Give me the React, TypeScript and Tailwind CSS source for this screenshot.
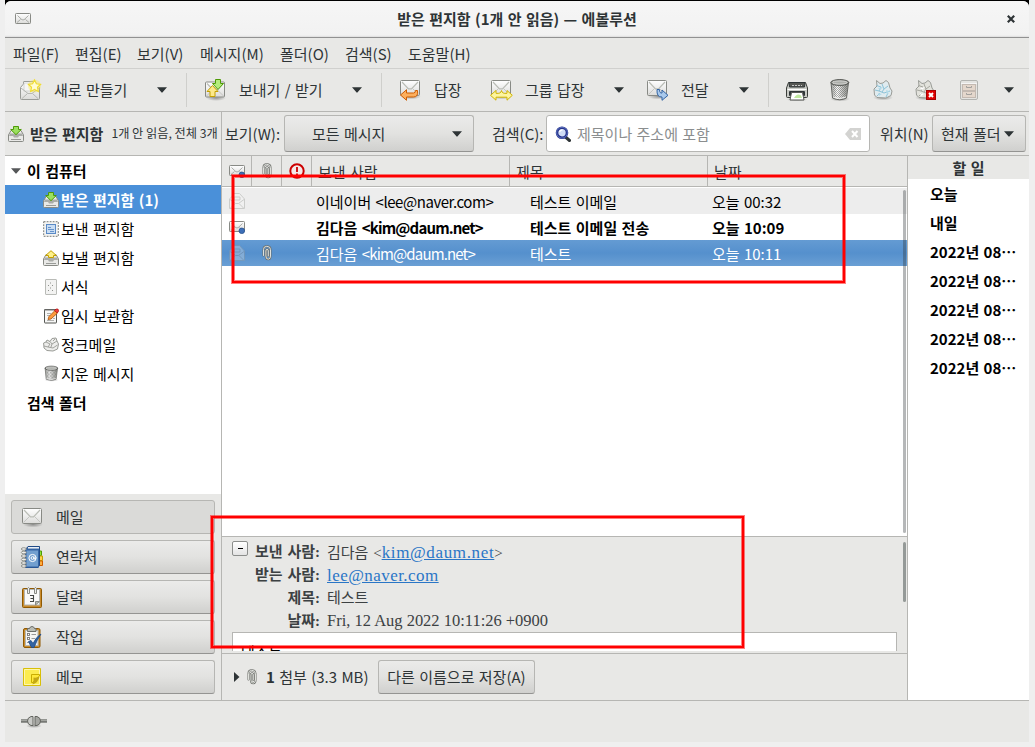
import type { ReactNode } from 'react';

const Arrow = ({ c = '#2e3436' }: { c?: string }) => (
  <svg width="10" height="6" viewBox="0 0 10 6" className="shrink-0">
    <path d="M0 0.3H10L5.6 5.3Q5 6 4.4 5.3Z" fill={c} />
  </svg>
);

const Defs = () => (
  <svg width="0" height="0" className="absolute">
    <defs>
      <linearGradient id="paper" x1="0" y1="0" x2="0" y2="1">
        <stop offset="0" stopColor="#ffffff" />
        <stop offset="1" stopColor="#dcdcda" />
      </linearGradient>
      <linearGradient id="metal" x1="0" y1="0" x2="1" y2="0">
        <stop offset="0" stopColor="#9c9e9a" />
        <stop offset="0.35" stopColor="#ffffff" />
        <stop offset="1" stopColor="#8b8d89" />
      </linearGradient>
      <pattern id="mesh" width="2" height="2" patternUnits="userSpaceOnUse">
        <rect width="1" height="1" fill="#555753" />
        <rect x="1" y="1" width="1" height="1" fill="#555753" />
      </pattern>
      <radialGradient id="shade">
        <stop offset="0" stopColor="#000" stopOpacity="0.35" />
        <stop offset="1" stopColor="#000" stopOpacity="0" />
      </radialGradient>
    </defs>
  </svg>
);

const Svg = ({ s = 24, v = 24, children, className = '' }: { s?: number; v?: number; children: ReactNode; className?: string }) => (
  <svg width={s} height={s} viewBox={`0 0 ${v} ${v}`} className={`shrink-0 ${className}`}>
    {children}
  </svg>
);

const Envelope = () => (
  <>
    <ellipse cx="13" cy="18.5" rx="10" ry="3" fill="url(#shade)" />
    <rect x="2.5" y="2.5" width="19" height="15" rx="1" fill="url(#paper)" stroke="#888a85" />
    <path d="M3.5 16.5L9.5 10.5M20.5 16.5L14.5 10.5" stroke="#c4c5c2" fill="none" />
    <path d="M4 4L10.500 10.800H13.500L20 4" stroke="#babdb6" strokeWidth="1.2" fill="none" />
  </>
);

const NewMail = () => (
  <Svg>
    <path d="M2.5 9.5L5.5 6V4Q5.500 3.500 6 3.500H15L21.500 9.500V20.500Q21.500 21.500 20.500 21.500H3.500Q2.500 21.500 2.500 20.500Z" fill="url(#paper)" stroke="#9a9c98" />
    <rect x="6" y="5" width="12" height="8" fill="#f6f6f5" stroke="#c9cac7" strokeWidth="0.7" />
    <path d="M3 10L10 15.500H14L21 10M3.500 21L9.500 15.500M20.500 21L14.500 15.500" stroke="#b5b7b2" fill="none" />
    <circle cx="16.500" cy="8" r="6.500" fill="#fce94f" opacity="0.4" />
    <path d="M16.500 2L18.400 5.800L22.500 6.400L19.500 9.300L20.300 13.500L16.500 11.500L12.700 13.500L13.500 9.300L10.500 6.400L14.600 5.800Z" fill="#fffbd0" stroke="#f0dc30" strokeWidth="1.2" />
  </Svg>
);

const SendReceive = () => (
  <Svg>
    <g transform="translate(0 1.500)"><Envelope /></g>
    <path d="M12.500 1.500H17.500V5.500H20.500L15 11.500L9.500 5.500H12.500Z" fill="#b4ec7c" stroke="#4e9a06" />
    <path d="M7 18.500V13.500H4L9.500 7.500L15 13.500H12V18.500Z" fill="#fce98a" stroke="#c4a000" />
  </Svg>
);

const Reply = () => (
  <Svg>
    <Envelope />
    <path d="M2.500 17L8.500 11.800V15H15.500Q17.500 15 17.500 12.500H19.500Q20.500 19 15.500 19H8.500V22.300Z" fill="#fcaf5e" stroke="#ce5c00" />
  </Svg>
);

const ReplyAll = () => (
  <Svg>
    <Envelope />
    <path d="M1.500 17.300L7 12.500V15.300Q12 16 12.500 12.500Q13 16 18 15.300V12.500L23.300 17.300L18 22.200V19.200H7V22.200Z" fill="#fdf5a0" stroke="#d0b400" />
  </Svg>
);

const Forward = () => (
  <Svg>
    <Envelope />
    <path d="M12 11.500H14.500Q14.500 15.500 17 15V12L23 17.300L17 22.300V19Q11.500 19.500 12 11.500Z" fill="#a9c9ec" stroke="#3465a4" />
  </Svg>
);

const Printer = () => (
  <Svg>
    <ellipse cx="12" cy="21.500" rx="11" ry="2" fill="url(#shade)" />
    <path d="M3.500 4.500H20.500L22.500 10V18.500Q22.500 19.500 21.500 19.500H2.500Q1.500 19.500 1.500 18.500V10Z" fill="#c8cac5" stroke="#3b3e3a" />
    <path d="M4 4.500H20L19.500 9H4.500Z" fill="#555753" stroke="#2e3436" />
    <path d="M7 7.500H17" stroke="#c8c8c8" strokeDasharray="2 1" />
    <path d="M2.500 11.500H21.500" stroke="#fff" />
    <rect x="4" y="13" width="16" height="5" rx="1" fill="#2e3436" />
    <path d="M6.500 14.500H17.500L19 22H5Z" fill="#fff" stroke="#555753" />
    <path d="M9 20Q12 14.500 16 17.500L17 20Z" fill="#c0e8a0" />
  </Svg>
);

const Trash = ({ s = 24 }: { s?: number }) => (
  <Svg s={s}>
    <ellipse cx="12" cy="21" rx="10" ry="2.500" fill="url(#shade)" />
    <path d="M3 4.500L4.500 20Q12 23.500 18.500 20L20.500 4.500Z" fill="url(#metal)" stroke="#666864" />
    <path d="M4.500 6L6 19.500Q12 22 17.500 19.500L19.500 6Z" fill="url(#mesh)" opacity="0.5" />
    <path d="M5 19Q12 22 18 19" stroke="#eeeeec" fill="none" />
    <ellipse cx="11.800" cy="4.500" rx="9" ry="2.900" fill="#777975" stroke="#555753" />
    <ellipse cx="11.800" cy="4.500" rx="7.500" ry="1.700" fill="#aeb0ac" stroke="#eeeeec" strokeWidth="0.700" />
  </Svg>
);

const Crumple = ({ blue }: { blue?: boolean }) => (
  <>
    <ellipse cx="12" cy="19.500" rx="10" ry="3" fill="url(#shade)" />
    <path d="M5.500 2.500L9 5.500L12 5L15 2.500L17.500 4.500L19 10L21 13L20 17.500L15 20L6 19.500L3.500 17L3 11L6 8Z" fill={blue ? '#e0ebef' : '#e2e2dc'} stroke="#999b96" />
    <path d="M5.500 7.500L10 9L8 13L4 12M11 6L13 11L17 8M8 13L13 15L19 13M6 18L9 15M13 11L11 14M15 19L17 15" stroke={blue ? '#8dc3d8' : '#a5a69e'} fill="none" />
    <path d="M7 10L9 12L12 9ZM15 12L18 13L16 17ZM7 15L11 16L8 18Z" fill={blue ? '#b4dbe9' : '#ffffff'} />
  </>
);

const NotJunk = () => (
  <Svg>
    <g transform="translate(-1 0)"><Crumple /></g>
    <rect x="12.500" y="12.500" width="9" height="9" fill="#e00000" stroke="#a40000" />
    <path d="M15 15L19 19M19 15L15 19" stroke="#fff" strokeWidth="2" />
  </Svg>
);

const Archive = () => (
  <Svg className="opacity-60">
    <rect x="3.500" y="2.500" width="17" height="19" rx="1.500" fill="#e2e2df" stroke="#8f918d" />
    <path d="M4 5.500H20" stroke="#fff" />
    <rect x="5.500" y="6.500" width="13" height="6" fill="#e2cdbb" stroke="#ab9b8e" />
    <rect x="5.500" y="13.500" width="13" height="6" fill="#e2cdbb" stroke="#ab9b8e" />
    <path d="M9.500 8V9.500H14.500V8M9.500 15V16.500H14.500V15" fill="none" stroke="#74716d" />
  </Svg>
);

const Tray = ({ up }: { up?: boolean }) => (
  <Svg s={16} v={16}>
    <path d="M0.500 9L3 4.500H13L15.500 9V14.500Q15.500 15.500 14.500 15.500H1.500Q0.500 15.500 0.500 14.500Z" fill="#e9e9e7" stroke="#888a85" />
    <path d="M2 7.500H14L15 10H11L10 11.500H6L5 10H1Z" fill="#aaaca8" />
    <path d="M3 13.500H13" stroke="#999b97" />
    {up ? (
      <path d="M5.500 7.500V5.500H2.700L8 0.700L13.300 5.500H10.500V7.500Z" fill="#fdf08a" stroke="#c4a000" />
    ) : (
      <path d="M5.500 0.500H10.500V3.500H13.300L8 8.700L2.700 3.500H5.500Z" fill="#9be060" stroke="#4e9a06" />
    )}
  </Svg>
);

const Stamp = () => (
  <Svg s={16} v={16}>
    <rect x="0.700" y="0.700" width="14.600" height="14.600" fill="#f3f3f1" stroke="#777975" strokeDasharray="1.800 1.200" />
    <rect x="3.500" y="3.500" width="9" height="9" fill="#c9ddf3" stroke="#5a8ac6" />
    <path d="M5 6.500H8M5 8.500H11M7 10.500H11" stroke="#5a8ac6" strokeWidth="0.900" />
  </Svg>
);

const Template = () => (
  <Svg s={16} v={16}>
    <rect x="2.500" y="0.500" width="11" height="15" rx="0.500" fill="#f3f3f2" stroke="#b9bbb7" />
    <path d="M7 4H9M5 6.500H7M9 6.500H11M7 9H9M5 11.500H7M9 11.500H11" stroke="#8f918d" strokeDasharray="1 1" />
  </Svg>
);

const Draft = () => (
  <Svg s={16} v={16}>
    <rect x="1.500" y="1.500" width="12" height="13.500" rx="0.500" fill="#f7f7f6" stroke="#555753" />
    <path d="M1.500 2H12" stroke="#777" strokeWidth="2" strokeDasharray="1 1" />
    <path d="M4 5.500H8M4 7.500H7M4 12.500H11M10 10.500H12" stroke="#b0b0ae" />
    <path d="M5 11.500L6 8.500L12 2.500L14.500 5L8 11Z" fill="#fc9b3e" stroke="#a85008" strokeWidth="0.800" />
    <path d="M11.500 2.500L13 1H15L15.700 3L14.300 5Z" fill="#ef4040" stroke="#a40000" strokeWidth="0.600" />
  </Svg>
);

const Junk = () => (
  <Svg s={16} v={16}>
    <path d="M4 3L7 4.500L9 1.500L13 1L14 4L15.500 7L14.500 12L10 14L4 13.500L1 11L0.600 6L3 5Z" fill="#ededeb" stroke="#999b96" />
    <path d="M3 5L7 7L5 10L1 9M7 4.500L9 7L14 4M5 10L10 11L14.500 8M9 7L8 10M10 4L12 2" stroke="#8f918c" strokeWidth="0.800" fill="none" />
  </Svg>
);

const SmallMail = ({ dot, tone = '#888a85' }: { dot?: boolean; tone?: string }) => (
  <svg width="16" height="14" viewBox="0 0 16 14" className="shrink-0">
    <rect x="0.500" y="1.500" width="15" height="10" rx="0.800" fill="url(#paper)" stroke={tone} />
    <path d="M2.500 3.500L7 7.800H9L13.500 3.500M2 10.500L5.500 7.500M14 10.500L10.500 7.500" fill="none" stroke="#aaaca8" />
    {dot && <circle cx="12.800" cy="10.800" r="2.800" fill="#3d6fb8" stroke="#204a87" strokeWidth="0.700" />}
  </svg>
);

const OpenMail = ({ faded }: { faded?: boolean }) => (
  <Svg s={16} v={16} className={faded ? 'opacity-35' : 'opacity-40'}>
    <path d="M0.500 6L3.500 3V0.500H10.500L15.500 6V15.500H0.500Z" fill={faded ? '#d5dfe8' : '#f6f6f5'} stroke="#9a9c98" />
    <path d="M1 6.500L6.500 10.500H9.500L15 6.500M1.500 15L6 10.500M14.500 15L10 10.500M5 4H11V7H5Z" fill="none" stroke="#9a9c98" />
  </Svg>
);

const clipWire = 'M1.500 10.500V4.500Q1.500 1.300 4.800 1.300Q8.500 1.300 8.500 4.500V11Q8.500 14.200 6.200 14.200Q3.900 14.200 3.900 11V6Q3.900 4.300 5.100 4.300Q6.300 4.300 6.300 6V11';
const Clip = () => (
  <svg width="10" height="16" viewBox="0 0 10 16" className="shrink-0">
    <path d={clipWire} fill="none" strokeLinecap="round" stroke="#6a6c67" strokeWidth="2" />
    <path d={clipWire} fill="none" strokeLinecap="round" stroke="#eceeea" strokeWidth="0.900" />
  </svg>
);

const Warn = () => (
  <Svg s={16} v={16}>
    <circle cx="8" cy="8" r="6.700" fill="#f4e9e8" stroke="#cc0000" strokeWidth="2" />
    <path d="M8 4V9M8 10.500V12" stroke="#cc0000" strokeWidth="1.800" />
  </Svg>
);

const Search = () => (
  <Svg s={16} v={16}>
    <path d="M10.500 11L14.500 14.500" stroke="#2e3436" strokeWidth="3" strokeLinecap="round" />
    <circle cx="7" cy="6.700" r="5" fill="#cfdcf5" stroke="#27348b" strokeWidth="2.600" />
    <path d="M4.500 6Q5 4 7.500 3.800" stroke="#fff" fill="none" strokeWidth="1.300" />
    <circle cx="7" cy="6.700" r="5.400" fill="none" stroke="#6e86cf" strokeWidth="0.700" />
  </Svg>
);

const ClearIcon = () => (
  <svg width="16" height="12" viewBox="0 0 16 12">
    <path d="M0 6L5 0H16V12H5Z" fill="#d3d3d1" />
    <path d="M7 3L12.500 9M12.500 3L7 9" stroke="#fff" strokeWidth="2" />
  </svg>
);

const Contacts = () => (
  <Svg>
    <path d="M19 6H21.500V10.500H19Z" fill="#8ae234" stroke="#4e9a06" />
    <path d="M19 11H22.500V15.500H19Z" fill="#fcd04f" stroke="#c4a000" />
    <path d="M19 16H22.500V20.500H19Z" fill="#fcaf3e" stroke="#ce5c00" />
    <path d="M5.500 4.500L8 1.500H19.500V20L18 22.500H5.500Z" fill="#3465a4" stroke="#204a87" />
    <path d="M8 2.800H19" stroke="#fff" strokeWidth="1.400" />
    <rect x="6" y="5" width="12.500" height="17" fill="#729fcf" stroke="#3465a4" />
    <circle cx="12.500" cy="13" r="3.600" stroke="#fff" fill="none" />
    <circle cx="12.500" cy="13" r="1.400" stroke="#fff" fill="none" />
    <path d="M14 11.500V14Q15.500 14.500 16 12.500" stroke="#fff" fill="none" />
    {[4, 7.500, 11, 14.500, 18, 21].map((y) => (
      <ellipse key={y} cx="3.800" cy={y} rx="2.500" ry="1.300" fill="#eeeeec" stroke="#888a85" strokeWidth="0.900" />
    ))}
  </Svg>
);

const Calendar = () => (
  <Svg>
    <rect x="2.500" y="3.500" width="19" height="19" rx="1" fill="#c98b2c" stroke="#8f5902" />
    <rect x="4.500" y="4.500" width="15" height="15.500" fill="#fafafa" stroke="#b5b6b2" />
    <path d="M15.500 20V16.500H19.500Z" fill="#babdb6" stroke="#888a85" />
    <path d="M10 10.500H13.500V16.500H10M10.500 13.500H13.500" stroke="#454745" fill="none" strokeWidth="1.100" />
    <path d="M7.500 8.500V3.500Q8.500 1.500 9.500 3.500V8.500ZM14.500 8.500V3.500Q15.500 1.500 16.500 3.500V8.500Z" fill="#eeeeec" stroke="#888a85" />
  </Svg>
);

const Tasks = () => (
  <Svg>
    <rect x="3.500" y="3.500" width="16.500" height="19" rx="1.500" fill="#c98b2c" stroke="#8f5902" />
    <rect x="5.500" y="5.500" width="12.500" height="15" fill="#f5f5f4" stroke="#b5b6b2" />
    <path d="M7.500 5.500V3.500H9.500Q10 1.500 12 1.500Q14 1.500 14.500 3.500H16V6.500H7.500Z" fill="#babdb6" stroke="#6c6e6a" />
    <rect x="7.500" y="8.500" width="2" height="2" fill="#fff" stroke="#777" strokeWidth="0.900" />
    <rect x="7.500" y="12.500" width="2" height="2" fill="#fff" stroke="#777" strokeWidth="0.900" />
    <path d="M11.500 9.500H16M11.500 13.500H15M7 17.500H10" stroke="#999" />
    <path d="M8.500 16.500L11 15.500L13 18.500Q16 12 21 9Q17 14.500 14 22.500H11.500Z" fill="#3465a4" stroke="#204a87" strokeWidth="0.800" />
  </Svg>
);

const Memo = () => (
  <Svg>
    <path d="M3.500 3.500H20.500V20.500H3.500Z" fill="#fcec50" stroke="#d8bf08" />
    <path d="M4.500 4.500H19.500V19.500H4.500Z" fill="none" stroke="#fff7a8" />
    <path d="M11.500 17V9.500H19.500V11L12 18Z" fill="#ffe93a" stroke="#c9ad00" />
    <path d="M12.500 19.500Q14 16.500 13.500 12.500Q17 13 19.500 11.500Q18.500 17.500 12.500 19.500Z" fill="#c4a813" />
  </Svg>
);

const Plug = () => (
  <svg width="28" height="14" viewBox="0 0 28 14">
    <ellipse cx="14" cy="12" rx="8" ry="2" fill="url(#shade)" />
    <path d="M1 7H8M20 7H27" stroke="#777975" strokeWidth="3.500" />
    <path d="M1 6.500H8M20 6.500H27" stroke="#a3a5a0" strokeWidth="1" />
    <path d="M13 2.500H11Q7.500 3.500 7.500 7Q7.500 10.500 11 11.500H13Z" fill="#c9cac7" stroke="#63655f" />
    <path d="M15 2.500H17Q20.500 3.500 20.500 7Q20.500 10.500 17 11.500H15Z" fill="#a5a6a2" stroke="#63655f" />
  </svg>
);

const Sep = () => <div className="h-[34px] w-px shrink-0 bg-[#cfcfcc]" />;
const DropCell = ({ w }: { w: string }) => (
  <div className={`flex shrink-0 justify-center ${w}`}><Arrow /></div>
);
const Tool = ({ icon, label, w }: { icon: ReactNode; label?: string; w: string }) => (
  <div className={`flex shrink-0 items-center ${w}`}>
    {icon}
    {label && <span className="ml-3 pb-[2px]">{label}</span>}
  </div>
);

const gradBtn =
  'rounded-[3px] border border-[#b6b6b3] border-b-[#949492] bg-linear-to-b from-[#ebebea] via-[#e2e2e0] to-[#d0d0ce]';

const menus: [string, string][] = [
  ['파일(F)', 'w-[62px]'],
  ['편집(E)', 'w-[62px]'],
  ['보기(V)', 'w-[63px]'],
  ['메시지(M)', 'w-[80px]'],
  ['폴더(O)', 'w-[65px]'],
  ['검색(S)', 'w-[63px]'],
  ['도움말(H)', 'w-[70px]'],
];

const folders: [string, ReactNode][] = [
  ['받은 편지함 (1)', <Tray />],
  ['보낸 편지함', <Stamp />],
  ['보낼 편지함', <Tray up />],
  ['서식', <Template />],
  ['임시 보관함', <Draft />],
  ['정크메일', <Junk />],
  ['지운 메시지', <Trash s={17} />],
];

const sections: [string, ReactNode][] = [
  ['메일', <Svg><g transform="translate(0 1)"><Envelope /></g></Svg>],
  ['연락처', <Contacts />],
  ['달력', <Calendar />],
  ['작업', <Tasks />],
  ['메모', <Memo />],
];

const messages = [
  { name: '이네이버', mail: '<lee@naver.com>', fit: 'tracking-[-0.45px]', subject: '테스트 이메일', date: '오늘 00:32', style: 'bg-[#ededed] text-black', icon: <OpenMail /> },
  { name: '김다음', mail: '<kim@daum.net>', fit: 'tracking-[-0.85px]', subject: '테스트 이메일 전송', date: '오늘 10:09', style: 'bg-white text-black font-bold', icon: <SmallMail dot /> },
  { name: '김다음', mail: '<kim@daum.net>', fit: 'tracking-[-0.85px]', subject: '테스트', date: '오늘 10:11', style: 'bg-linear-to-b from-[#649bd3] via-[#5590cd] to-[#6a9fd4] text-white', icon: <OpenMail faded />, clip: true },
];

const todo = ['오늘', '내일', '2022년 08⋯', '2022년 08⋯', '2022년 08⋯', '2022년 08⋯', '2022년 08⋯'];

const HeaderLine = ({ label, children }: { label: string; children: ReactNode }) => (
  <div className="flex h-[23px] items-center whitespace-nowrap">
    <div className="w-[73px] text-right font-bold">{label}</div>
    <div className="pl-[7px]">{children}</div>
  </div>
);

export default function App() {
  return (
    <div className="relative h-[747px] w-[1035px] overflow-hidden bg-[#efefef] font-['Noto_Sans_CJK_KR',sans-serif] text-[15px] leading-none whitespace-nowrap text-[#2e3436] [word-spacing:1px]">
      <Defs />
      <div className="mx-[5px] w-[1024px] bg-black pt-px">
        <div className="flex h-[741px] flex-col overflow-hidden rounded-t-[6px] bg-[#e8e8e6]">
          <header className="flex h-[37px] shrink-0 items-center border-b border-[#919191] bg-linear-to-b from-[#f6f6f6] via-[#f2f2f2] via-95% to-[#dcdcdc]">
            <div className="ml-[10px]"><SmallMail /></div>
            <h1 className="ml-[-26px] flex-1 pb-[2px] text-center text-[15px] font-bold">받은 편지함 (1개 안 읽음) — 에볼루션</h1>
            <svg width="8" height="8" viewBox="0 0 8 8" className="mr-[14px] ml-[-22px]">
              <path d="M0.800 0.800L7.200 7.200M7.200 0.800L0.800 7.200" stroke="#2e3436" strokeWidth="2.200" />
            </svg>
          </header>

          <nav className="flex h-[31px] shrink-0 items-center border-b border-[#d0d0ce] pl-2">
            {menus.map(([m, w]) => (
              <span key={m} className={`shrink-0 ${w}`}>{m}</span>
            ))}
          </nav>

          <div className="flex h-[43px] shrink-0 items-center border-b border-[#b6b6b3] pl-[13px]">
            <Tool icon={<NewMail />} label="새로 만들기" w="w-[130px]" />
            <DropCell w="w-[28px]" />
            <div className="w-[10px]" /><Sep />
            <div className="w-[16px]" />
            <Tool icon={<SendReceive />} label="보내기 / 받기" w="w-[140px]" />
            <DropCell w="w-[28px]" />
            <div className="w-[10px]" /><Sep />
            <div className="w-[16px]" />
            <Tool icon={<Reply />} label="답장" w="w-[91px]" />
            <Tool icon={<ReplyAll />} label="그룹 답장" w="w-[116px]" />
            <DropCell w="w-[28px]" />
            <div className="w-[12px]" />
            <Tool icon={<Forward />} label="전달" w="w-[85px]" />
            <DropCell w="w-[28px]" />
            <div className="w-[10px]" /><Sep />
            <div className="w-[16px]" />
            <Tool icon={<Printer />} w="w-[43px]" />
            <Tool icon={<Trash />} w="w-[43px]" />
            <Tool icon={<Svg><Crumple blue /></Svg>} w="w-[43px]" />
            <Tool icon={<NotJunk />} w="w-[43px]" />
            <Tool icon={<Archive />} w="w-[38px]" />
            <DropCell w="w-[28px]" />
          </div>

          <div className="flex h-[44px] shrink-0 items-center border-b border-[#b6b6b3]">
            <div className="flex h-full w-[217px] shrink-0 items-center overflow-hidden border-r border-[#b6b6b3] pl-[3px]">
              <Tray />
              <b className="ml-[6px]">받은 편지함</b>
              <span className="ml-[8px] text-[12.2px] [word-spacing:0px]">1개 안 읽음, 전체 3개</span>
            </div>
            <span className="ml-[3px] w-[59px]">보기(W):</span>
            <div className={`flex h-[37px] w-[190px] shrink-0 items-center ${gradBtn}`}>
              <span className="ml-[27px] flex-1">모든 메시지</span>
              <span className="mr-[11px]"><Arrow /></span>
            </div>
            <span className="ml-[18px] w-[54px]">검색(C):</span>
            <div className="flex h-[37px] w-[324px] shrink-0 items-center rounded-[3px] border border-[#b6b6b3] bg-white pl-2">
              <Search />
              <span className="ml-[6px] flex-1 text-[#8b8e8f]">제목이나 주소에 포함</span>
              <span className="mr-2"><ClearIcon /></span>
            </div>
            <span className="ml-[10px] w-[52px]">위치(N)</span>
            <div className={`flex h-[37px] w-[94px] shrink-0 items-center pl-2 gap-[3px] ${gradBtn}`}>
              현재 폴더 <Arrow />
            </div>
          </div>

          <div className="flex h-[544px] shrink-0">
            <aside className="flex w-[217px] shrink-0 flex-col border-r border-[#b6b6b3] bg-white text-black">
              <div className="flex h-[29px] items-center pl-[6px] font-bold">
                <Arrow c="#555759" />
                <span className="ml-[6px]">이 컴퓨터</span>
              </div>
              {folders.map(([name, icon], i) => (
                <div key={name} className={`flex h-[29px] items-center pl-[38px] ${i === 0 ? 'bg-[#4a90d9] font-bold text-white' : ''}`}>
                  <div className="flex w-[18px]">{icon}</div>
                  {name}
                </div>
              ))}
              <div className="flex h-[29px] items-center pl-[22px] font-bold">검색 폴더</div>
              <div className="mt-auto flex h-[206px] flex-col gap-[6px] bg-[#e8e8e6] px-[6px] pt-[6px] text-[#2e3436]">
                {sections.map(([name, icon], i) => (
                  <div key={name} className={`flex h-[34px] items-center pl-[8px] ${i === 0 ? 'rounded-[3px] border border-[#b6b6b3] bg-[#dadad8]' : gradBtn}`}>
                    {icon}
                    <span className="ml-3 pb-[2px]">{name}</span>
                  </div>
                ))}
              </div>
            </aside>

            <main className="flex w-[686px] shrink-0 flex-col border-r border-[#b6b6b3]">
              <section className="relative flex h-[381px] shrink-0 flex-col border-b border-[#b6b6b3] bg-white">
                <div className="flex h-[31px] shrink-0 items-center border-b border-[#b6b6b3] bg-[#e8e8e6] *:flex *:h-full *:items-center">
                  <div className="w-[30px] justify-center border-r border-[#b6b6b3]"><SmallMail dot /></div>
                  <div className="w-[30px] justify-center border-r border-[#b6b6b3]"><Clip /></div>
                  <div className="w-[30px] justify-center border-r border-[#b6b6b3]"><Warn /></div>
                  <div className="w-[198px] border-r border-[#b6b6b3] pt-px pl-[6px]">보낸 사람</div>
                  <div className="w-[198px] border-r border-[#b6b6b3] pt-px pl-[6px]">제목</div>
                  <div className="pt-px pl-[6px]">날짜</div>
                </div>
                <div className="pt-px">
                  {messages.map((m, i) => (
                    <div key={i} className={`flex h-[26px] items-center ${m.style}`}>
                      <div className="w-[30px] pl-[7px]">{m.icon}</div>
                      <div className="flex w-[64px] pl-[10px]">{m.clip && <Clip />}</div>
                      <div className="w-[214px] pt-px">{m.name} <span className={m.fit}>{m.mail}</span></div>
                      <div className="w-[182px] pt-px">{m.subject}</div>
                      <div className="pt-px">{m.date}</div>
                    </div>
                  ))}
                </div>
                <div className="absolute top-[34px] right-px h-[343px] w-[3px] rounded-full bg-[#2e3436]/35" />
              </section>

              <section className="relative flex h-[117px] shrink-0 flex-col overflow-hidden border-b border-[#b6b6b3] pt-[3px] pl-[10px] font-['Liberation_Serif','Noto_Sans_CJK_KR',serif] text-[15px]">
                <div className="flex h-[92px]">
                  <div className="mt-px flex h-[15px] w-[16px] shrink-0 items-center justify-center rounded-[2px] border border-[#8c8e8c] bg-linear-to-b from-white to-[#e4e4e4]">
                    <div className="h-[1.500px] w-[5px] bg-black" />
                  </div>
                  <div className="-ml-[1px] pt-px text-[#3c4143]">
                    <HeaderLine label="보낸 사람:">
                      김다음 &lt;<span className="text-[17px] tracking-[0.65px] text-[#2a76c6] underline">kim@daum.net</span>&gt;
                    </HeaderLine>
                    <HeaderLine label="받는 사람:"><span className="text-[17px] tracking-[0.45px] text-[#2a76c6] underline">lee@naver.com</span></HeaderLine>
                    <HeaderLine label="제목:">테스트</HeaderLine>
                    <HeaderLine label="날짜:"><span className="text-[16.500px] tracking-[-0.01px] [word-spacing:0px]">Fri, 12 Aug 2022 10:11:26 +0900</span></HeaderLine>
                  </div>
                </div>
                <div className="h-[19px] w-[665px] overflow-hidden border border-b-0 border-[#b6b6b3] bg-white pt-[13px] pl-2 text-black">테스트</div>
                <div className="absolute top-[5px] right-px h-[60px] w-[3px] rounded-full bg-[#959a98]" />
              </section>

              <section className="flex h-[46px] items-center pl-[12px]">
                <svg width="6" height="10" viewBox="0 0 6 10"><path d="M0 0L5.500 5L0 10Z" fill="#2e3436" /></svg>
                <span className="ml-[7px] flex"><Clip /></span>
                <span className="ml-[9px] w-[112px] pb-[2px]"><b>1</b> 첨부 (3.3 MB)</span>
                <div className={`flex h-[34px] w-[157px] shrink-0 items-center justify-center pb-[2px] ${gradBtn}`}>다른 이름으로 저장(A)</div>
              </section>
            </main>

            <aside className="w-[121px] bg-white font-bold text-black">
              <div className="flex h-[23px] items-center justify-center bg-[#e8e8e6] text-[#2e3436]">할 일</div>
              <div>
                {todo.map((t, i) => (
                  <div key={i} className="flex h-[29px] items-center pl-[22px]">{t}</div>
                ))}
              </div>
            </aside>
          </div>

          <footer className="flex h-[42px] shrink-0 items-center border-t border-[#b6b6b3] pb-[2px] pl-[15px]"><Plug /></footer>
        </div>
      </div>
      <div className="absolute top-[175px] left-[232px] h-[108px] w-[613px] border-2 border-[#ff0000] shadow-[0_0_0_1px_rgba(255,0,0,0.5),inset_0_0_0_1px_rgba(255,0,0,0.5)]" />
      <div className="absolute top-[516px] left-[211px] h-[132px] w-[533px] border-2 border-[#ff0000] shadow-[0_0_0_1px_rgba(255,0,0,0.5),inset_0_0_0_1px_rgba(255,0,0,0.5)]" />
    </div>
  );
}
